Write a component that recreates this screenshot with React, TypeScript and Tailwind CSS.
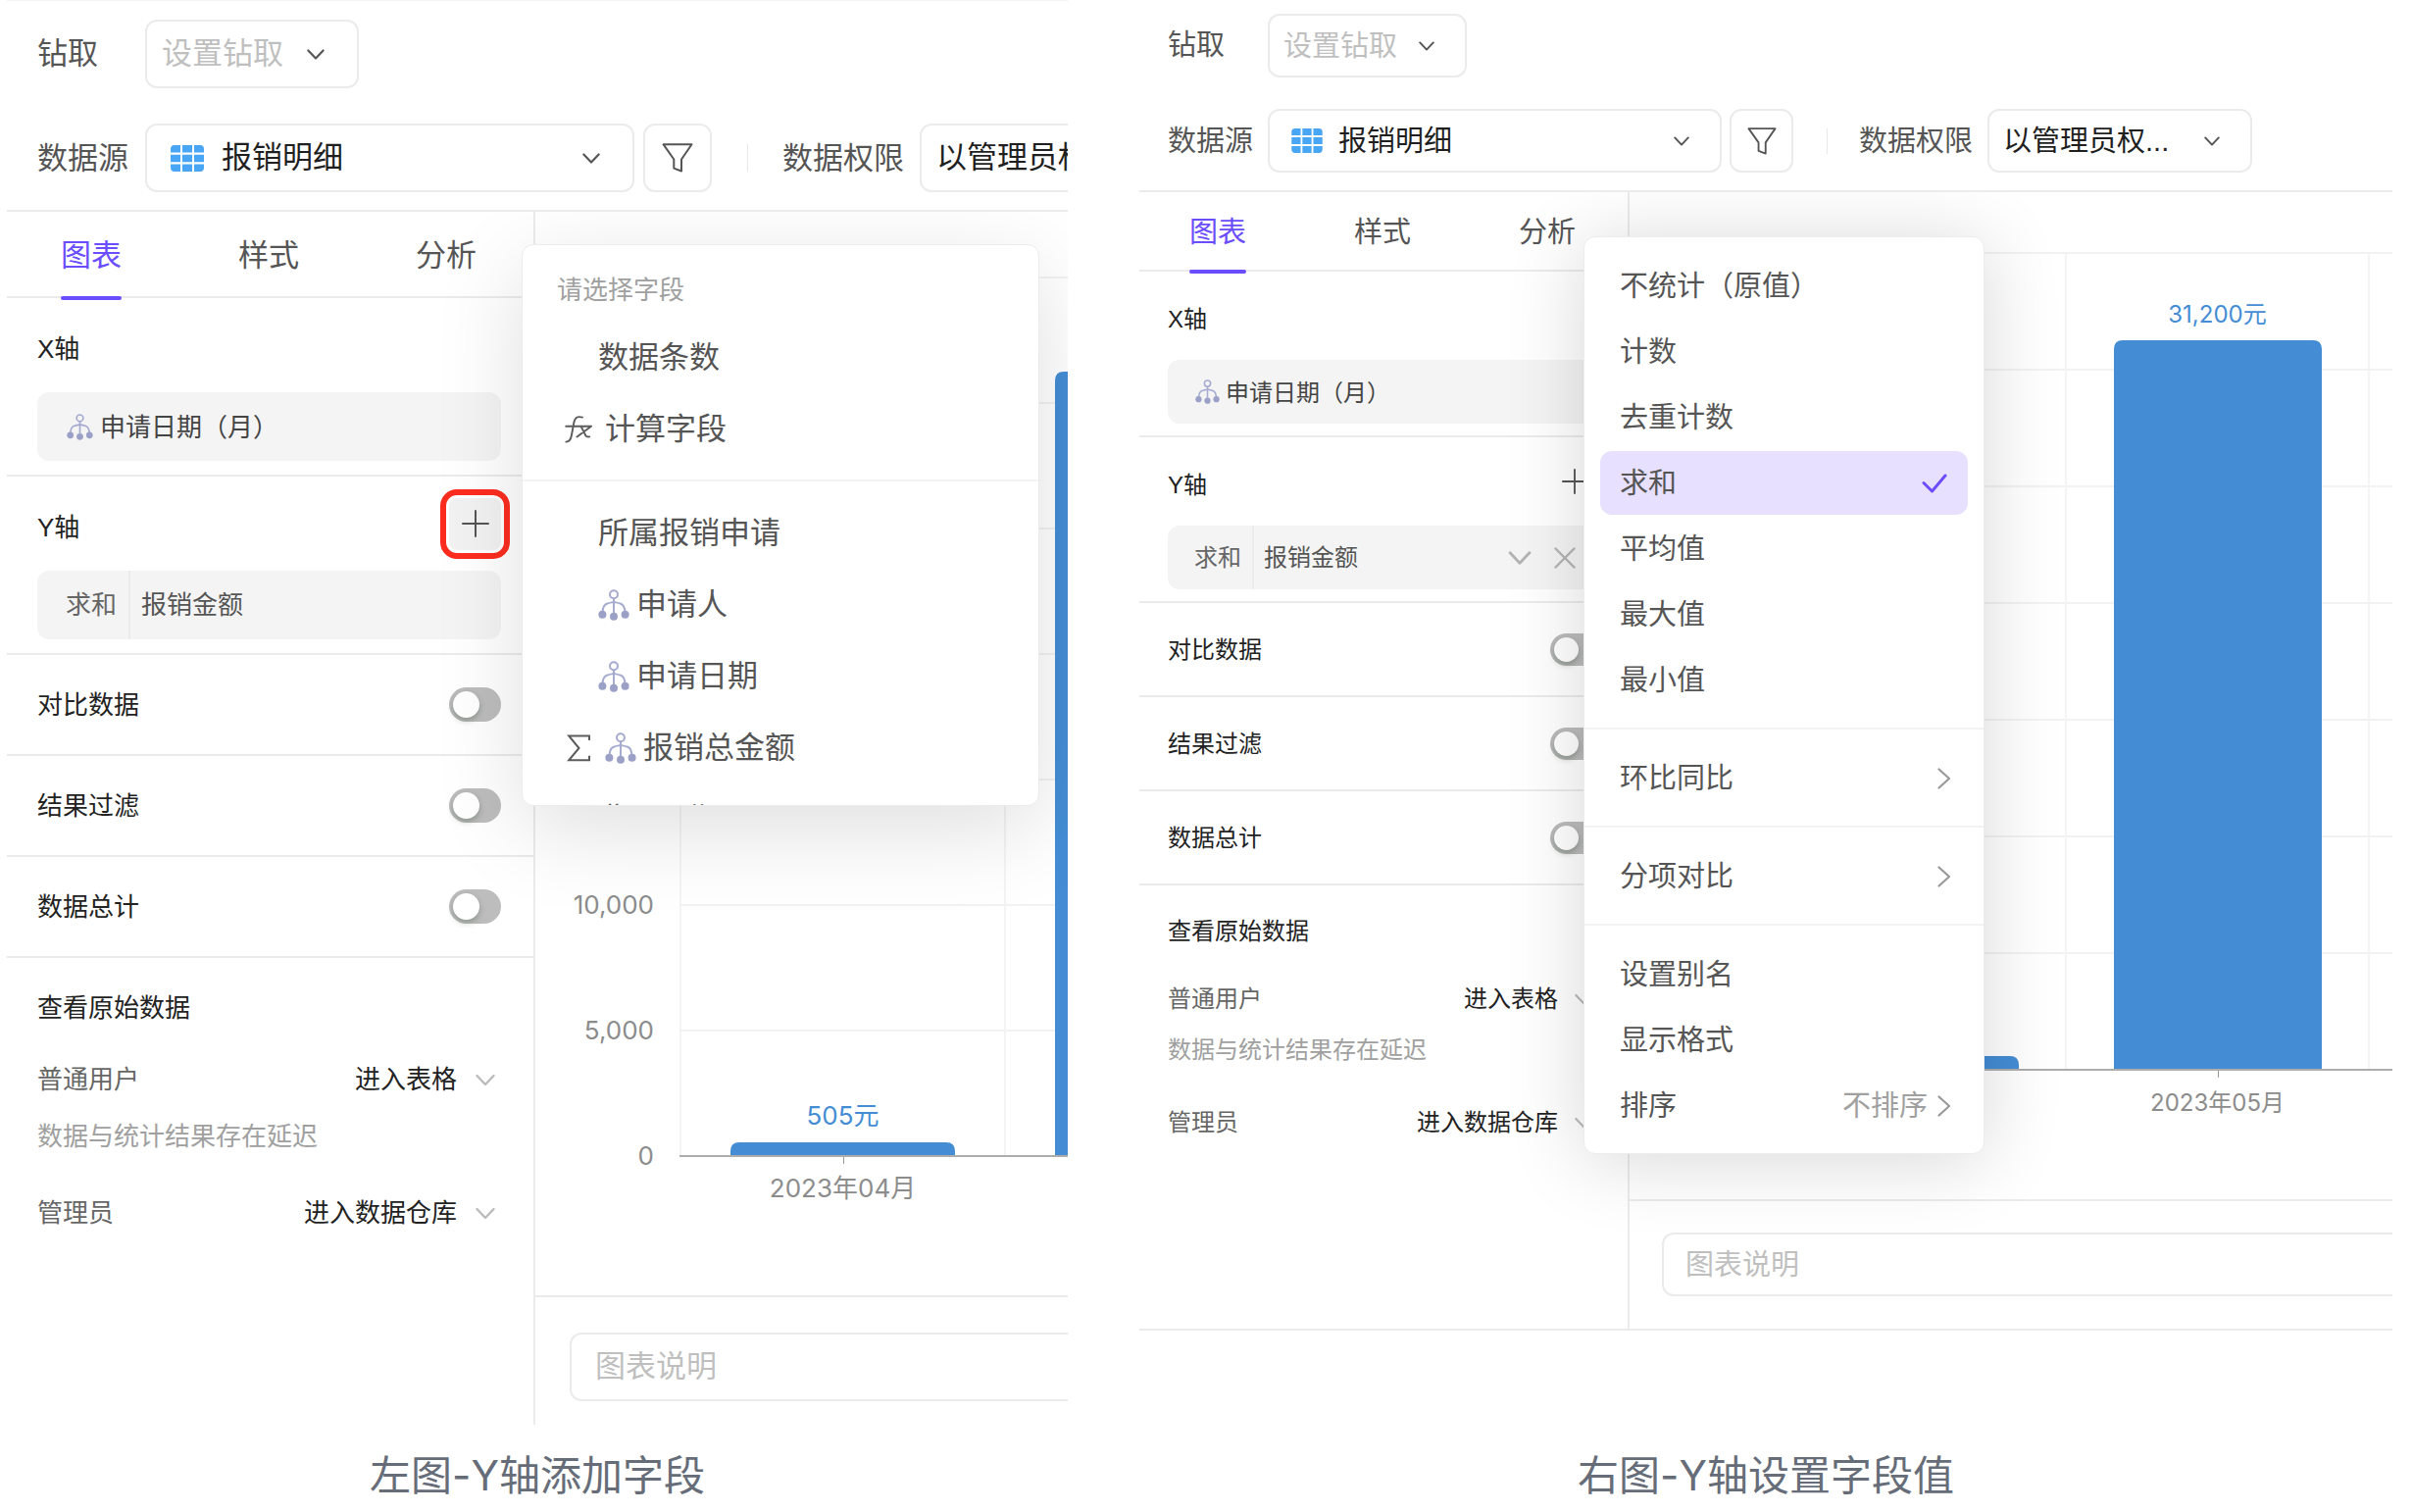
import { createContext, useContext, useId, type ReactNode } from "react";

type Size = "lg" | "md";

const styles = {
  lg: {
    text: "text-[31px]",
    small: "text-[26px]",
    header: "border-t border-t-[#f3f3f3] pt-[19px] pb-[18px] pl-[31px]",
    headerGap: "gap-9",
    label: "w-[110px]",
    control: "h-[70px]",
    controlIcon: "mr-[35px] h-[11px] w-[18px]",
    selectPad: "pl-[15px] pr-[60px]",
    sourcePad: "pl-[76px] pr-[60px]",
    drill: "w-[218px]",
    source: "w-[499px]",
    filter: "ml-[9px] w-[70px]",
    divider: "ml-9 mr-[35px] h-7",
    rights: "ml-4 w-[292px]",
    tableIcon: "ml-[26px] h-[27px] w-[34px]",
    funnel: "h-[30px] w-[32px]",
    sidebar: "w-[539px]",
    tabs: "h-[88px] pl-[55px] gap-[119px]",
    title: "h-24",
    section: "pl-[31px] pr-[33px] pb-[14px]",
    row: "h-[103px] pl-[31px] pr-[33px]",
    pill: "h-[70px]",
    pillIcon: "ml-[30px] mr-[7px] size-[27px]",
    aggregate: "pl-[29px] pr-3",
    fieldName: "pl-[11px]",
    add: "h-[53px] w-[53px]",
    plus: "size-[28px]",
    toggle: "h-[35px] w-[53px] before:size-[27px]",
    raw: "pl-[31px] pr-[33px]",
    rawTitle: "h-[102px]",
    rawRow: "h-[44px]",
    rawNote: "h-[72px]",
    rawRowLast: "h-[84px]",
    rawSelect: "pr-[44px]",
    rawChevron: "mr-[6px] h-[13px] w-[20px]",
    describe: "pl-[35px] pt-9 pb-6",
    input: "h-[70px] pl-[24px]",
  },
  md: {
    text: "text-[29px]",
    small: "text-[24px]",
    header: "pt-[14px] pb-[18px] pl-[29px]",
    headerGap: "gap-8",
    label: "w-[102px]",
    control: "h-[65px]",
    controlIcon: "mr-[33px] h-[10px] w-[16px]",
    selectPad: "pl-[14px] pr-[50px] pt-[2px]",
    sourcePad: "pl-[70px] pr-[56px] pt-[2px]",
    drill: "w-[203px]",
    source: "w-[463px]",
    filter: "ml-[8px] w-[65px]",
    divider: "ml-[34px] mr-[32px] h-[26px]",
    rights: "ml-[15px] w-[270px]",
    tableIcon: "ml-[24px] h-[25px] w-[32px]",
    funnel: "h-[28px] w-[30px]",
    sidebar: "w-[500px]",
    tabs: "h-[81px] pl-[51px] gap-[110px]",
    title: "h-[90px]",
    section: "pl-[29px] pr-[30px] pb-3",
    row: "h-24 pl-[29px] pr-[30px]",
    pill: "h-[65px]",
    pillIcon: "ml-[28px] mr-[6px] size-[25px]",
    aggregate: "pl-[27px] pr-[11px]",
    fieldName: "pl-[10px]",
    add: "h-[49px] w-[49px]",
    plus: "size-[26px]",
    toggle: "h-[33px] w-[49px] before:size-[25px]",
    raw: "pl-[29px] pr-[30px]",
    rawTitle: "h-[94px]",
    rawRow: "h-[44px]",
    rawNote: "h-[60px]",
    rawRowLast: "h-[88px]",
    rawSelect: "pr-[41px]",
    rawChevron: "mr-[6px] h-[12px] w-[18px]",
    describe: "pl-[33px] pt-8 pb-[33px]",
    input: "h-[65px] pl-[22px] pt-[2px]",
  },
} as const;

const SizeContext = createContext<Size>("lg");
const useStyles = () => styles[useContext(SizeContext)];

/* ---------- icons ---------- */

function ChevronDown({ className = "" }: { className?: string }) {
  return (
    <svg viewBox="0 0 20 12" fill="none" stroke="currentColor" strokeWidth="2.400" strokeLinecap="round" strokeLinejoin="round" className={`pointer-events-none shrink-0 ${className}`} aria-hidden="true">
      <path d="M1.500 1.500 10 10.500 18.500 1.500" />
    </svg>
  );
}

function ChevronRight() {
  return (
    <svg viewBox="0 0 14 22" fill="none" stroke="currentColor" strokeWidth="2.200" strokeLinecap="round" strokeLinejoin="round" className="h-[22px] w-[14px] shrink-0 text-[#999]" aria-hidden="true">
      <path d="M1.500 1.500 12 11 1.500 20.500" />
    </svg>
  );
}

function TableIcon({ className }: { className: string }) {
  return (
    <svg viewBox="0 0 34 27" className={`pointer-events-none ${className}`} fill="#49a6f4" aria-hidden="true">
      <path d="M4 0h6v7.6H0V4a4 4 0 0 1 4-4ZM12 0h10v7.6H12ZM24 0h6a4 4 0 0 1 4 4v3.6H24Z" />
      <path d="M0 9.800h10v7.400H0ZM12 9.800h10v7.400H12ZM24 9.800h10v7.400H24Z" />
      <path d="M0 19.400h10V27H4a4 4 0 0 1-4-4ZM12 19.400h10V27H12ZM24 19.400h10V23a4 4 0 0 1-4 4h-6Z" />
    </svg>
  );
}

function FunnelIcon({ className }: { className: string }) {
  return (
    <svg viewBox="0 0 32 30" className={className} fill="none" stroke="#555" strokeWidth="2" strokeLinejoin="round" aria-hidden="true">
      <path d="M1.500 1.200h29L20 16.500V28.500L12.300 25.600V16.500Z" />
    </svg>
  );
}

function TreeIcon({ className }: { className: string }) {
  return (
    <svg viewBox="0 0 32 32" className={`shrink-0 ${className}`} fill="none" stroke="#a6abd0" strokeWidth="2" aria-hidden="true">
      <circle cx="16" cy="5.200" r="4" />
      <path d="M16 9.200V24M4.600 23c.200-4.600 1.600-7.200 4.200-8.200 2.200-.900 4.400-1.300 7.200-1.900 2.800.600 5 1 7.200 1.900 2.600 1 4 3.600 4.200 8.200" />
      <g fill="#9ba0c6" stroke="none">
        <circle cx="4.400" cy="25.800" r="4" />
        <circle cx="16" cy="27.700" r="4" />
        <circle cx="27.600" cy="25.800" r="4" />
      </g>
    </svg>
  );
}

function PlusIcon({ className }: { className: string }) {
  return (
    <svg viewBox="0 0 28 28" className={className} fill="none" stroke="#555" strokeWidth="2" strokeLinecap="round" aria-hidden="true">
      <path d="M14 1v26M1 14h26" />
    </svg>
  );
}

function FunctionIcon() {
  return (
    <svg viewBox="0 0 28 28" className="size-7" fill="none" stroke="#5c5c5c" strokeWidth="1.900" strokeLinecap="round" strokeLinejoin="round" aria-hidden="true">
      <path d="M18 1.600c-5-1.400-7.600 0-8.700 5.600L6.800 20.500C6 24.600 4.600 26.400 1.400 26.600" />
      <path d="M1.200 10.800H27M27 10.800 12.500 21.500M16.500 10.800 21.500 20.500q.700 1.200 3.700.900" />
    </svg>
  );
}

function SumIcon() {
  return (
    <svg viewBox="0 0 26 28" className="h-7 w-[26px]" fill="none" stroke="#5c5c5c" strokeWidth="2" strokeLinejoin="miter" aria-hidden="true">
      <path d="M24 6V1.500H3.200L13.500 14 3.200 26.300H24V21.800" />
    </svg>
  );
}

/* ---------- controls ---------- */

function Select({ label, value, width, pad, tone, icon }: { label: string; value: string; width: string; pad: string; tone: string; icon?: ReactNode }) {
  const s = useStyles();
  return (
    <div className={`grid shrink-0 items-center ${width}`}>
      <select
        aria-label={label}
        className={`col-start-1 row-start-1 w-full appearance-none rounded-[12px] border-2 border-[#ebebeb] bg-white ${s.control} ${s.text} ${pad} ${tone}`}
      >
        <option>{value}</option>
      </select>
      {icon && <span className="pointer-events-none col-start-1 row-start-1 justify-self-start">{icon}</span>}
      <ChevronDown className={`col-start-1 row-start-1 justify-self-end text-[#555] ${s.controlIcon}`} />
    </div>
  );
}

function Header() {
  const s = useStyles();
  return (
    <header className={`flex flex-col border-b-2 border-b-[#ebebeb] ${s.header} ${s.headerGap}`}>
      <div className={`flex items-center ${s.text} text-[#555]`}>
        <span className={`shrink-0 ${s.label}`}>钻取</span>
        <Select label="钻取" value="设置钻取" width={s.drill} pad={s.selectPad} tone="text-[#bfbfbf]" />
      </div>
      <div className={`flex items-center whitespace-nowrap ${s.text} text-[#555]`}>
        <span className={`shrink-0 pt-[2px] ${s.label}`}>数据源</span>
        <Select label="数据源" value="报销明细" width={s.source} pad={s.sourcePad} tone="text-[#1f1f1f]" icon={<TableIcon className={s.tableIcon} />} />
        <button type="button" aria-label="筛选" className={`flex shrink-0 items-center justify-center rounded-[12px] border-2 border-[#ebebeb] ${s.control} ${s.filter}`}>
          <FunnelIcon className={s.funnel} />
        </button>
        <span className={`w-px shrink-0 bg-[#e8e8e8] ${s.divider}`} />
        <span className="shrink-0 pt-[2px]">数据权限</span>
        <Select label="数据权限" value="以管理员权..." width={s.rights} pad={s.selectPad} tone="text-[#1f1f1f]" />
      </div>
    </header>
  );
}

function Tabs() {
  const s = useStyles();
  return (
    <nav className={`flex border-b-2 border-[#ebebeb] ${s.tabs} ${s.text}`}>
      {["图表", "样式", "分析"].map((tab, i) => (
        <button
          key={tab}
          type="button"
          className={
            i === 0
              ? "relative shrink-0 pt-[4px] text-[#6a4dff] after:absolute after:inset-x-0 after:-bottom-1 after:h-1 after:rounded-full after:bg-[#6a4dff]"
              : "shrink-0 pt-[4px] text-[#555]"
          }
        >
          {tab}
        </button>
      ))}
    </nav>
  );
}

function ToggleRow({ label }: { label: string }) {
  const s = useStyles();
  const id = useId();
  return (
    <div className={`flex items-center justify-between border-b-2 border-[#ebebeb] ${s.row} ${s.small}`}>
      <label htmlFor={id} className="pt-[2px] text-[#222]">{label}</label>
      <input
        id={id}
        type="checkbox"
        role="switch"
        className={`flex appearance-none items-center rounded-full bg-[#bdbdbd] pl-1 before:rounded-full before:bg-white before:shadow-[0_3px_6px_rgba(0,35,11,0.25)] before:content-[''] ${s.toggle}`}
      />
    </div>
  );
}

function RawRow({ label, value, height }: { label: string; value: string; height: string }) {
  const s = useStyles();
  const id = useId();
  return (
    <div className={`flex items-center justify-between ${height}`}>
      <label htmlFor={id} className="text-[#666]">{label}</label>
      <div className="grid items-center">
        <select id={id} className={`col-start-1 row-start-1 appearance-none bg-transparent text-[#222] ${s.rawSelect}`}>
          <option>{value}</option>
        </select>
        <ChevronDown className={`col-start-1 row-start-1 justify-self-end text-[#bbb] ${s.rawChevron}`} />
      </div>
    </div>
  );
}

function Sidebar({ active }: { active: boolean }) {
  const s = useStyles();
  return (
    <aside className={`shrink-0 border-r-2 border-[#ebebeb] ${s.sidebar}`}>
      <Tabs />
      <section className={`border-b-2 border-[#ebebeb] ${s.section} ${s.small}`}>
        <h2 className={`flex items-center pt-[8px] text-[#222] ${s.title}`}>X轴</h2>
        <div className={`flex items-center rounded-[12px] bg-[#f4f4f4] text-[#444] ${s.pill}`}>
          <TreeIcon className={s.pillIcon} />
          <span className="pt-[2px]">申请日期（月）</span>
        </div>
      </section>
      <section className={`border-b-2 border-[#ebebeb] ${s.section} ${s.small}`}>
        <div className={`flex items-center justify-between text-[#222] ${s.title}`}>
          <h2 className="pt-[8px]">Y轴</h2>
          <button
            type="button"
            aria-label="添加字段"
            className={`flex items-center justify-center rounded-[8px] ${s.add} ${active ? "" : "bg-[#f2f2f2] outline-[6px] outline-offset-[3px] outline-[#fc2d1f]"}`}
          >
            <PlusIcon className={s.plus} />
          </button>
        </div>
        <div className={`flex items-center rounded-[12px] bg-[#f4f4f4] ${s.pill}`}>
          <span className={`flex h-full items-center border-r-2 border-[#ebebeb] text-[#666] ${s.aggregate}`}>求和</span>
          <span className={`grow text-[#555] ${s.fieldName}`}>报销金额</span>
          {active && (
            <span className="flex items-center gap-[23px] pr-[23px] text-[#b3b3b3]">
              <button type="button" aria-label="展开"><ChevronDown className="h-[14px] w-[24px]" /></button>
              <button type="button" aria-label="移除">
                <svg viewBox="0 0 22 22" className="size-[22px]" fill="none" stroke="currentColor" strokeWidth="2.400" strokeLinecap="round" aria-hidden="true">
                  <path d="M1.500 1.500l19 19M20.500 1.500l-19 19" />
                </svg>
              </button>
            </span>
          )}
        </div>
      </section>
      <ToggleRow label="对比数据" />
      <ToggleRow label="结果过滤" />
      <ToggleRow label="数据总计" />
      <section className={`${s.raw} ${s.small}`}>
        <h2 className={`flex items-center text-[#222] ${s.rawTitle}`}>查看原始数据</h2>
        <RawRow label="普通用户" value="进入表格" height={s.rawRow} />
        <p className={`flex items-center text-[#a0a0a0] ${s.rawNote}`}>数据与统计结果存在延迟</p>
        <RawRow label="管理员" value="进入数据仓库" height={s.rawRowLast} />
      </section>
    </aside>
  );
}

/* ---------- charts ---------- */

type ChartSpec = {
  className: string;
  axisX: number;
  baseline: number;
  step: number;
  columnWidth: number;
  barWidth: number;
  columns: { top: number; value?: string; month?: string }[];
  yLabels: string[];
};

const aprilChart: ChartSpec = {
  className: "h-[1105px] text-[26px]",
  axisX: 148,
  baseline: 963,
  step: 128,
  columnWidth: 331,
  barWidth: 229,
  columns: [{ top: 949, value: "505元", month: "2023年04月" }, { top: 163 }],
  yLabels: ["0", "5,000", "10,000"],
};

const mayChart: ChartSpec = {
  className: "h-[1027px] text-[24px]",
  axisX: 136,
  baseline: 895,
  step: 119,
  columnWidth: 309,
  barWidth: 212,
  columns: [{ top: 881 }, { top: 151, value: "31,200元", month: "2023年05月" }],
  yLabels: [],
};

function BarChart({ chart }: { chart: ChartSpec }) {
  const { axisX, baseline, step, columnWidth, barWidth } = chart;
  const gridTop = baseline - step * 7;
  return (
    <svg className={`block w-full font-['Inter','Noto_Sans_CJK_SC',sans-serif] ${chart.className}`} role="img" aria-label="报销金额">
      {[1, 2, 3, 4, 5, 6, 7].map((n) => (
        <rect key={n} x={axisX} y={baseline - step * n - 1} width="100%" height="2" fill="#f2f2f2" />
      ))}
      {[0, 1, 2].map((n) => (
        <rect key={n} x={axisX + columnWidth * n - 1} y={gridTop} width="2" height={baseline - gridTop} fill="#f4f4f4" />
      ))}
      {chart.columns.map((c, i) => {
        const center = axisX + columnWidth * (i + 0.5);
        const left = Math.round(center - barWidth / 2);
        const right = left + barWidth;
        return (
          <g key={i}>
            <path d={`M${left} ${baseline}V${c.top + 9}q0-9 9-9H${right - 9}q9 0 9 9V${baseline}Z`} fill="#448dd5" />
            <rect x={Math.round(center)} y={baseline} width="1" height="8" fill="#999" />
            {c.value && <text x={center} y={c.top - 18} textAnchor="middle" fill="#448dd5">{c.value}</text>}
            {c.month && <text x={center} y={baseline + 42} textAnchor="middle" fill="#8c8c8c">{c.month}</text>}
          </g>
        );
      })}
      <rect x={axisX - 1} y={baseline - 1} width="100%" height="2" fill="#adadad" />
      {chart.yLabels.map((label, n) => (
        <text key={label} x={axisX - 27} y={baseline - step * n + 9} textAnchor="end" fill="#8c8c8c">{label}</text>
      ))}
    </svg>
  );
}

/* ---------- menus ---------- */

function FieldItem({ label, lead, tree }: { label: string; lead?: ReactNode; tree?: boolean }) {
  return (
    <button type="button" className="flex h-[73px] w-full shrink-0 items-center pl-[43px] text-left">
      {lead ? (
        <span className="mr-[13px] flex w-7 items-center justify-center">{lead}</span>
      ) : (
        <span className="w-[34px]" />
      )}
      {tree && <TreeIcon className="mr-[7px] size-8" />}
      <span className="pt-[2px]">{label}</span>
    </button>
  );
}

function FieldMenu() {
  return (
    <div className="absolute left-[525px] top-[33px] flex h-[573px] w-[528px] flex-col overflow-hidden rounded-[12px] border border-[#ececec] bg-white text-[31px] text-[#555] shadow-[0_24px_90px_rgba(0,0,0,0.13)]">
      <p className="flex h-[78px] shrink-0 items-center pl-[35px] pt-[14px] text-[26px] text-[#a0a0a0]">请选择字段</p>
      <FieldItem label="数据条数" />
      <FieldItem label="计算字段" lead={<FunctionIcon />} />
      <hr className="mt-[15px] mb-4 shrink-0 border-t-2 border-[#f3f3f3]" />
      <FieldItem label="所属报销申请" />
      <FieldItem label="申请人" tree />
      <FieldItem label="申请日期" tree />
      <FieldItem label="报销总金额" lead={<SumIcon />} tree />
      <FieldItem label="费用日期" />
    </div>
  );
}

type Entry = { label: string; more?: boolean; note?: string; checked?: boolean };

const valueGroups: Entry[][] = [
  [
    { label: "不统计（原值）" },
    { label: "计数" },
    { label: "去重计数" },
    { label: "求和", checked: true },
    { label: "平均值" },
    { label: "最大值" },
    { label: "最小值" },
  ],
  [{ label: "环比同比", more: true }],
  [{ label: "分项对比", more: true }],
  [{ label: "设置别名" }, { label: "显示格式" }, { label: "排序", note: "不排序", more: true }],
];

function ValueMenu() {
  return (
    <div className="absolute left-[453px] top-[45px] w-[409px] divide-y-2 divide-[#f3f3f3] rounded-[12px] border border-[#ececec] bg-white text-[29px] text-[#555] shadow-[0_6px_80px_rgba(0,0,0,0.16)]">
      {valueGroups.map((group, i) => (
        <div key={i} className="flex flex-col gap-[2px] px-4 pb-4 pt-[17px]">
          {group.map((item) => (
            <button
              key={item.label}
              type="button"
              className={`flex h-[65px] w-full items-center rounded-[12px] pl-5 pr-[17px] ${item.checked ? "bg-[#e7e1ff]" : ""}`}
            >
              <span className="grow pt-[2px] text-left">{item.label}</span>
              {item.note && <span className="mr-[10px] pt-[2px] text-[#a0a0a0]">{item.note}</span>}
              {item.more && <ChevronRight />}
              {item.checked && (
                <svg viewBox="0 0 26 20" className="mr-1 h-5 w-[26px] text-[#6a4dff]" fill="none" stroke="currentColor" strokeWidth="3" strokeLinecap="round" strokeLinejoin="round" aria-hidden="true">
                  <path d="M2 9.500 10.500 18 24 2" />
                </svg>
              )}
            </button>
          ))}
        </div>
      ))}
    </div>
  );
}

/* ---------- page ---------- */

function Panel({ size, chart, menu, active, className = "" }: { size: Size; chart: ChartSpec; menu: ReactNode; active: boolean; className?: string }) {
  const s = styles[size];
  return (
    <SizeContext.Provider value={size}>
      <div className="overflow-hidden">
        <Header />
        <div className={`relative flex overflow-hidden ${className}`}>
          <Sidebar active={active} />
          <main className="min-w-0 grow overflow-hidden">
            <BarChart chart={chart} />
            <div className={`border-t-2 border-[#ebebeb] ${s.describe}`}>
              <input
                type="text"
                aria-label="图表说明"
                placeholder="图表说明"
                className={`block w-full rounded-l-[12px] border-2 border-r-0 border-[#ebebeb] placeholder:text-[#bfbfbf] ${s.input} ${s.text}`}
              />
            </div>
          </main>
          {menu}
        </div>
      </div>
    </SizeContext.Provider>
  );
}

export default function App() {
  return (
    <div className="grid grid-cols-[1082fr_1278fr] gap-x-[73px] overflow-hidden bg-white pl-[7px] pr-5 font-['Liberation_Sans','Noto_Sans_CJK_SC',sans-serif] leading-[1.5]">
      <figure className="min-w-0">
        <Panel size="lg" chart={aprilChart} active={false} menu={<FieldMenu />} />
        <figcaption className="pt-5 text-center font-['Inter','Noto_Sans_CJK_SC',sans-serif] text-[42px] text-[#666d78]">左图-Y轴添加字段</figcaption>
      </figure>
      <figure className="flex min-w-0 flex-col justify-between">
        <Panel size="md" chart={mayChart} active menu={<ValueMenu />} className="border-b-2 border-[#ebebeb]" />
        <figcaption className="text-center font-['Inter','Noto_Sans_CJK_SC',sans-serif] text-[42px] text-[#666d78]">右图-Y轴设置字段值</figcaption>
      </figure>
    </div>
  );
}
